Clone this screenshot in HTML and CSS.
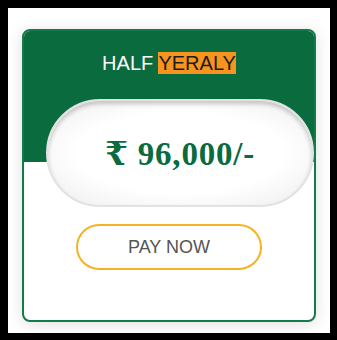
FILE: index.html
```html
<!DOCTYPE html>
<html lang="en">
<head>
    <meta charset="UTF-8">
    <meta name="viewport" content="width=device-width, initial-scale=1.0">
    <title>Plan - Half Yearly</title>
    <link rel="stylesheet" href="styles.css">
</head>
<body>
    <div class="frame">
        <div class="plan-card">
            <div class="plan-head">
                <h2 class="plan-title">HALF <span class="mark">YERALY</span></h2>
            </div>
            <div class="price-wrap">
                <div class="price-pill">
                    <span class="price">&#8377; 96,000/-</span>
                </div>
            </div>
            <div class="pay-row">
                <button class="pay-button">PAY NOW</button>
            </div>
        </div>
    </div>
</body>
</html>
```

FILE: styles.css
```css
html, body {
    margin: 0;
    padding: 0;
    background-color: #000;
}
.frame {
    margin: 8px;
    width: 322px;
    height: 325px;
    box-sizing: border-box;
    padding: 21px 14px 11px;
    background-color: #fff;
    font-family: "Liberation Sans", Arial, sans-serif;
}
.plan-card {
    height: 293px;
    box-sizing: border-box;
    border: 2px solid #157a49;
    border-radius: 8px;
    overflow: hidden;
    background-color: #fff;
    box-shadow: 0 2px 16px rgba(0,0,0,0.13);
}
.plan-head {
    height: 68px;
    box-sizing: border-box;
    padding-bottom: 4px;
    background-color: #0a6b3e;
    display: flex;
    align-items: center;
    justify-content: center;
}
.plan-title {
    margin: 0;
    font-size: 20px;
    font-weight: normal;
    color: #fff;
}
.mark {
    background-color: #f7941d;
    color: #1c1c1c;
}
.price-wrap {
    padding-left: 22px;
    background: linear-gradient(to bottom, #0a6b3e 63px, #fff 63px);
}
.price-pill {
    height: 108px;
    box-sizing: border-box;
    border: 2px solid #e2e2e2;
    border-radius: 54px;
    background: radial-gradient(ellipse at center, #fff 55%, #ededed 100%);
    box-shadow: inset 0 3px 4px rgba(0,0,0,0.2);
    display: flex;
    align-items: center;
    justify-content: center;
}
.price {
    font-family: "Liberation Serif", "DejaVu Serif", serif;
    font-weight: bold;
    font-size: 33px;
    color: #0a6b3e;
    letter-spacing: 0.8px;
}
.pay-row {
    display: flex;
    justify-content: center;
    margin-top: 17px;
}
.pay-button {
    width: 186px;
    height: 46px;
    border: 2px solid #f5b324;
    border-radius: 23px;
    background-color: #fff;
    color: #555;
    font-family: "Liberation Sans", Arial, sans-serif;
    font-size: 18px;
    cursor: pointer;
}
```
